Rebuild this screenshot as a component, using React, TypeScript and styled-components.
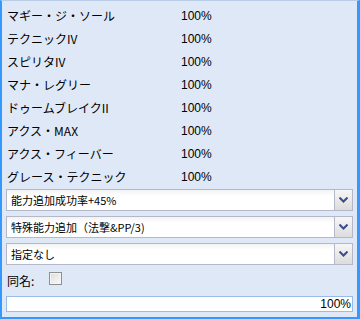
import React from "react";
import styled, { createGlobalStyle } from "styled-components";

const GlobalStyle = createGlobalStyle`
  html, body {
    margin: 0;
    padding: 0;
    background: #ffffff;
  }
  body {
    font-family: "Liberation Sans", "Noto Sans CJK JP", sans-serif;
    font-size: 12px;
    color: #000;
  }
`;

const Panel = styled.div`
  box-sizing: border-box;
  width: 360px;
  height: 319px;
  background: #dfe8f6;
  border-style: solid;
  border-color: #3399ff;
  border-width: 1px 3px 2px 2px;
  border-top-color: #b9cde8;
  padding: 3px 4px 0 4px;
  display: flex;
  flex-direction: column;
`;

const SkillList = styled.div`
  display: flex;
  flex-direction: column;
`;

const SkillRow = styled.div`
  display: grid;
  grid-template-columns: 174px 1fr;
  height: 23px;
  align-items: center;
  padding-left: 1px;
  font-family: "Noto Sans CJK JP", sans-serif;
  font-size: 12px;
  line-height: 1;
`;

const Percent = styled.span`
  font-family: "Liberation Sans", sans-serif;
  font-size: 12px;
`;

const Combos = styled.div`
  display: flex;
  flex-direction: column;
  gap: 5px;
  margin-top: 1px;
`;

const Combo = styled.div`
  box-sizing: border-box;
  height: 22px;
  display: flex;
  border: 1px solid #b5b8c8;
  background: linear-gradient(#f3f3f3, #ffffff 6px, #ffffff);
`;

const ComboText = styled.div`
  flex: 1;
  display: flex;
  align-items: center;
  padding-left: 4px;
  font-family: "Noto Sans CJK JP", sans-serif;
  font-size: 11px;
`;

const ComboTrigger = styled.div`
  width: 17px;
  border-left: 1px solid #b5b8c8;
  background: linear-gradient(#f7f7f7, #dcdcdc);
  display: flex;
  align-items: center;
  justify-content: center;
`;

const CheckRow = styled.div`
  display: flex;
  align-items: center;
  height: 30px;
  padding-left: 1px;
  font-family: "Noto Sans CJK JP", sans-serif;
  font-size: 12px;
`;

const CheckLabel = styled.span`
  width: 42px;
`;

const CheckBox = styled.span`
  box-sizing: border-box;
  width: 13px;
  height: 13px;
  border: 1px solid #8f8f8f;
  background: linear-gradient(135deg, #dcdcdc, #fbfbfb);
  box-shadow: inset 0 0 0 1px #f4f4f4;
  margin-top: -4px;
`;

const Progress = styled.div`
  box-sizing: border-box;
  height: 16px;
  border: 1px solid #99bbe8;
  background: #fff;
  display: flex;
  align-items: center;
  justify-content: flex-end;
  padding-right: 1px;
  font-size: 12px;
  margin-top: 1px;
`;

const skills = [
  "マギー・ジ・ソール",
  "テクニックIV",
  "スピリタIV",
  "マナ・レグリー",
  "ドゥームブレイクII",
  "アクス・MAX",
  "アクス・フィーバー",
  "グレース・テクニック",
];

const combos = ["能力追加成功率+45%", "特殊能力追加（法撃&PP/3)", "指定なし"];

const Chevron = () => (
  <svg width="9" height="6" viewBox="0 0 9 6">
    <path d="M0.5 0.5 L4.5 4.5 L8.5 0.5" fill="none" stroke="#3b4d8c" strokeWidth="2" />
  </svg>
);

export default function App() {
  return (
    <>
      <GlobalStyle />
      <Panel>
        <SkillList>
          {skills.map((s) => (
            <SkillRow key={s}>
              <span>{s}</span>
              <Percent>100%</Percent>
            </SkillRow>
          ))}
        </SkillList>
        <Combos>
          {combos.map((c) => (
            <Combo key={c}>
              <ComboText>{c}</ComboText>
              <ComboTrigger>
                <Chevron />
              </ComboTrigger>
            </Combo>
          ))}
        </Combos>
        <CheckRow>
          <CheckLabel>同名:</CheckLabel>
          <CheckBox />
        </CheckRow>
        <Progress>100%</Progress>
      </Panel>
    </>
  );
}
